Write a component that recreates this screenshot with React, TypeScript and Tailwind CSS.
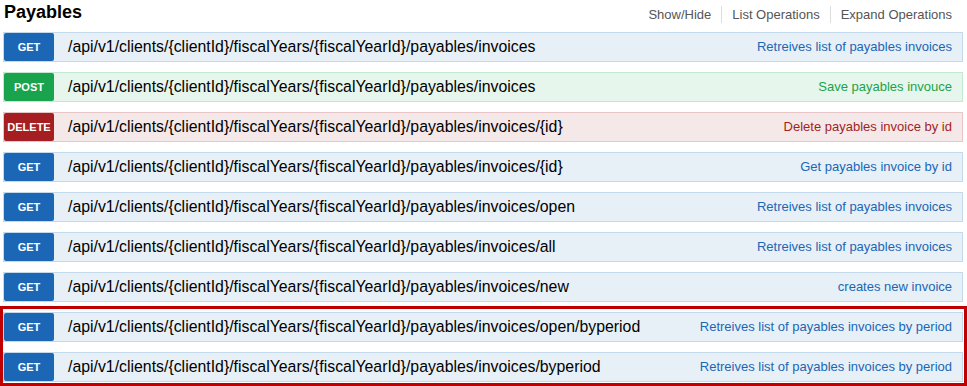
import React from "react";

type Op = { method: "GET" | "POST" | "DELETE"; path: string; desc: string };

const ops: Op[] = [
  { method: "GET", path: "/api/v1/clients/{clientId}/fiscalYears/{fiscalYearId}/payables/invoices", desc: "Retreives list of payables invoices" },
  { method: "POST", path: "/api/v1/clients/{clientId}/fiscalYears/{fiscalYearId}/payables/invoices", desc: "Save payables invouce" },
  { method: "DELETE", path: "/api/v1/clients/{clientId}/fiscalYears/{fiscalYearId}/payables/invoices/{id}", desc: "Delete payables invoice by id" },
  { method: "GET", path: "/api/v1/clients/{clientId}/fiscalYears/{fiscalYearId}/payables/invoices/{id}", desc: "Get payables invoice by id" },
  { method: "GET", path: "/api/v1/clients/{clientId}/fiscalYears/{fiscalYearId}/payables/invoices/open", desc: "Retreives list of payables invoices" },
  { method: "GET", path: "/api/v1/clients/{clientId}/fiscalYears/{fiscalYearId}/payables/invoices/all", desc: "Retreives list of payables invoices" },
  { method: "GET", path: "/api/v1/clients/{clientId}/fiscalYears/{fiscalYearId}/payables/invoices/new", desc: "creates new invoice" },
];

const highlighted: Op[] = [
  { method: "GET", path: "/api/v1/clients/{clientId}/fiscalYears/{fiscalYearId}/payables/invoices/open/byperiod", desc: "Retreives list of payables invoices by period" },
  { method: "GET", path: "/api/v1/clients/{clientId}/fiscalYears/{fiscalYearId}/payables/invoices/byperiod", desc: "Retreives list of payables invoices by period" },
];

function Row({ op }: { op: Op }) {
  const styles = {
    GET: { row: "bg-[#e7f0f7] border-[#c3d9ec]", badge: "bg-[#1b66b5]", desc: "text-[#1b66b5]" },
    POST: { row: "bg-[#e7f6ec] border-[#c3e8d1]", badge: "bg-[#18a34c]", desc: "text-[#18a34c]" },
    DELETE: { row: "bg-[#f5e8e8] border-[#e8c6c7]", badge: "bg-[#a41e22]", desc: "text-[#a41e22]" },
  }[op.method];
  return (
    <div className={`flex h-[30px] items-center border ${styles.row}`}>
      <div className={`flex h-[28px] w-[50px] shrink-0 items-center justify-center rounded-[2px] text-[11px] font-bold text-white ${styles.badge}`}>
        {op.method}
      </div>
      <div className="ml-[14px] flex-1 whitespace-nowrap text-[15.85px] text-black">{op.path}</div>
      <div className={`pr-[10px] whitespace-nowrap text-[13px] ${styles.desc}`}>{op.desc}</div>
    </div>
  );
}

export default function App() {
  return (
    <div className="h-[386px] w-[967px] overflow-hidden bg-white pl-[3px] pr-[4px] font-['Liberation_Sans',Arial,sans-serif]">
      <div className="flex h-[32px] items-start justify-between">
        <div className="ml-[1px] pt-[1px] text-[18px] font-bold leading-[22px] text-black">Payables</div>
        <div className="mr-[11px] mt-[6px] flex items-center text-[13px] leading-[17px] text-[#555]">
          <span className="border-r border-[#ddd] pr-[10px]">Show/Hide</span>
          <span className="border-r border-[#ddd] px-[10px]">List Operations</span>
          <span className="pl-[10px]">Expand Operations</span>
        </div>
      </div>
      <div className="flex flex-col gap-[10px]">
        {ops.map((op, i) => (
          <Row key={i} op={op} />
        ))}
      </div>
      <div className="-ml-[3px] -mr-[4px] mt-[4px] flex flex-col gap-[10px] border-[3px] border-[#c00000] pb-[1px] pl-0 pr-[1px] pt-[3px]">
        {highlighted.map((op, i) => (
          <Row key={i} op={op} />
        ))}
      </div>
    </div>
  );
}
